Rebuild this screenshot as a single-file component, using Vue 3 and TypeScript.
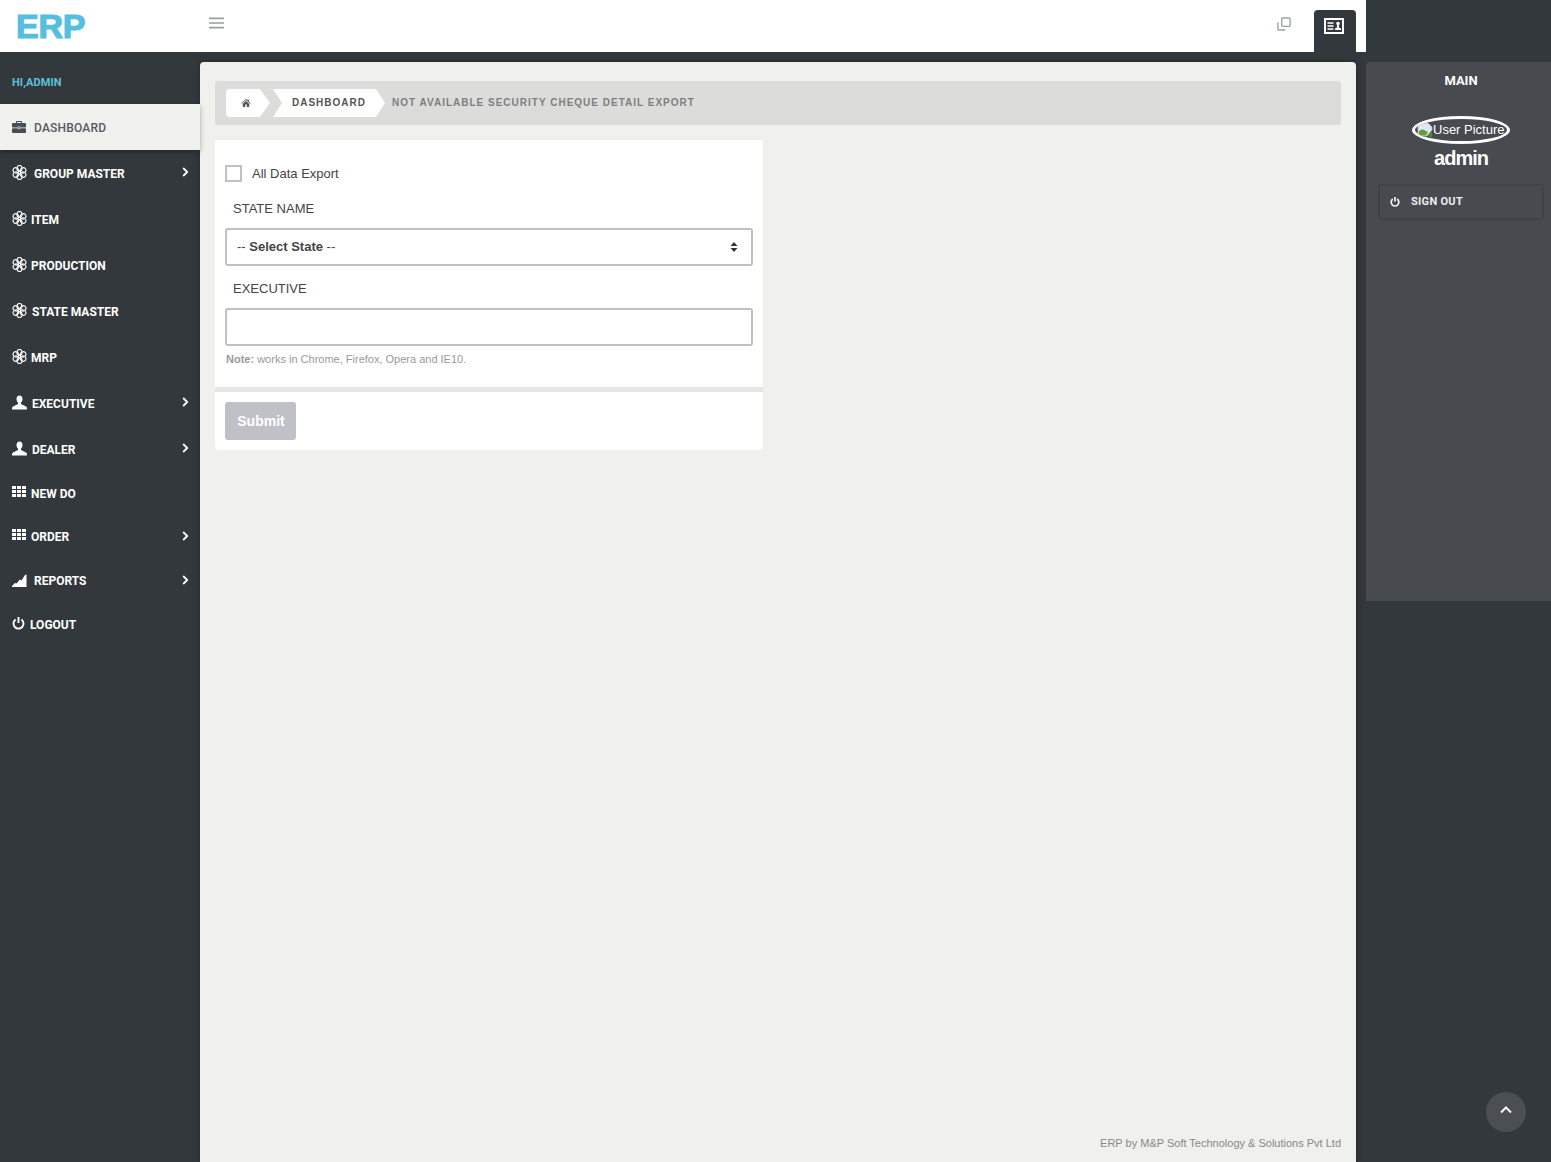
<script setup lang="ts">
type Icon = 'flower' | 'user' | 'grid' | 'chart' | 'power'
interface NavItem { label: string; icon: Icon; height: number; gap: number; arrow?: boolean; low?: boolean }
const items: NavItem[] = [
  { label: 'GROUP MASTER', icon: 'flower', height: 46, gap: 7, arrow: true },
  { label: 'ITEM', icon: 'flower', height: 46, gap: 4 },
  { label: 'PRODUCTION', icon: 'flower', height: 46, gap: 4 },
  { label: 'STATE MASTER', icon: 'flower', height: 46, gap: 5 },
  { label: 'MRP', icon: 'flower', height: 46, gap: 4 },
  { label: 'EXECUTIVE', icon: 'user', height: 46, gap: 5, arrow: true },
  { label: 'DEALER', icon: 'user', height: 46, gap: 5, arrow: true },
  { label: 'NEW DO', icon: 'grid', height: 43, gap: 5 },
  { label: 'ORDER', icon: 'grid', height: 43, gap: 5, arrow: true, low: true },
  { label: 'REPORTS', icon: 'chart', height: 45, gap: 7, arrow: true, low: true },
  { label: 'LOGOUT', icon: 'power', height: 43, gap: 5 },
]
const petals = [0, 60, 120, 180, 240, 300]
</script>

<template>
  <div class="app">
    <header class="header">
      <div class="topbar">
        <div class="logo">ERP</div>
        <svg class="burger" viewBox="0 0 16 12"><path d="M0 1h16M0 6h16M0 11h16" stroke="#9a9ea1" stroke-width="1.8" fill="none" /></svg>
        <div class="top-right">
          <svg class="restore" viewBox="0 0 15 15" fill="none" stroke="#9da3a8" stroke-width="1.5">
            <rect x="5" y="1" width="9" height="9" rx="1" />
            <path d="M1 6v7a1 1 0 0 0 1 1h7" />
          </svg>
          <div class="tab">
            <svg class="card-ico" viewBox="0 0 20 16">
              <rect x="1" y="1" width="18" height="14" fill="none" stroke="#fff" stroke-width="2" />
              <path d="M3.500 5h6M3.500 8h6M3.500 11h6" stroke="#fff" stroke-width="1.500" />
              <circle cx="14" cy="5.500" r="1.800" fill="#fff" />
              <path d="M13 7h2v2.500l2 1V12h-6v-1.500l2-1z" fill="#fff" />
            </svg>
          </div>
        </div>
      </div>
    </header>

    <div class="layout">
      <nav class="sidebar">
        <div class="hi">HI,ADMIN</div>
        <div class="dash">
          <svg class="ico-brief" viewBox="0 0 14 12">
            <path d="M5 2V1h4v1h1V.8C10 .3 9.700 0 9.200 0H4.800C4.300 0 4 .3 4 .8V2z" fill="#474c55" />
            <rect x="0" y="2" width="14" height="4.500" rx="1" fill="#474c55" />
            <rect x="0" y="7.200" width="14" height="4.800" rx="1" fill="#474c55" />
            <rect x="6" y="5.800" width="2" height="2" fill="#474c55" stroke="#f0f0ec" stroke-width=".5" />
          </svg>
          <span class="dash-label">DASHBOARD</span>
        </div>
        <div
          v-for="item in items"
          :key="item.label"
          class="nav-item"
          :style="{ height: item.height + 'px', gap: item.gap + 'px' }"
        >
          <svg v-if="item.icon === 'flower'" class="ico" viewBox="-8 -8 16 16" fill="none" stroke="#fff" stroke-width="1.200">
            <ellipse v-for="a in petals" :key="a" cx="0" cy="-4.400" rx="2.700" ry="3.100" :transform="`rotate(${a})`" />
            <circle r="1.300" />
          </svg>
          <svg v-else-if="item.icon === 'user'" class="ico" viewBox="0 0 15 14" fill="#fff">
            <path d="M7.500 0C5.700 0 4.500 1.400 4.500 3.500c0 1.500.6 2.800 1.500 3.600v1.300L1 11c-.7.400-1 1-1 3h15c0-2-.3-2.600-1-3L9 8.400V7.100c.9-.8 1.500-2.100 1.500-3.600C10.500 1.400 9.300 0 7.500 0z" />
          </svg>
          <svg v-else-if="item.icon === 'grid'" class="ico ico-grid" viewBox="0 0 14 11" fill="#fff">
            <path d="M0 0h4v3H0zM5 0h4v3H5zM10 0h4v3h-4zM0 4h4v3H0zM5 4h4v3H5zM10 4h4v3h-4zM0 8h4v3H0zM5 8h4v3H5zM10 8h4v3h-4z" />
          </svg>
          <svg v-else-if="item.icon === 'chart'" class="ico" viewBox="0 0 15 13" fill="#fff">
            <path d="M0 13V12l3-3 1.500.5L8 5.500l1.500 1L13 1l1.500-.5V13z" />
          </svg>
          <svg v-else class="ico ico-power" viewBox="0 0 13 13" fill="none" stroke="#fff" stroke-width="1.900">
            <path d="M3.600 2.600a5 5 0 1 0 5.800 0" />
            <path d="M6.500 0v6" />
          </svg>
          <span class="label">{{ item.label }}</span>
          <svg v-if="item.arrow" class="chev" :class="{ low: item.low }" viewBox="0 0 7 10"><path d="M1.200 1l4 4-4 4" fill="none" stroke="#fff" stroke-width="1.800" /></svg>
        </div>
      </nav>

      <main class="main">
        <div class="crumbs">
          <div class="crumb crumb-home">
            <svg class="home" viewBox="0 0 12 10"><path d="M6 0l2 1.700V.6h1.600v2.500L12 5.200l-.6.700L6 1.300.6 5.900 0 5.200zM2 5.800L6 2.500l4 3.300V10H7V7H5v3H2z" fill="#555" /></svg>
          </div>
          <div class="crumb crumb-dash">DASHBOARD</div>
          <div class="crumb-text">NOT AVAILABLE SECURITY CHEQUE DETAIL EXPORT</div>
        </div>

        <form class="card" @submit.prevent>
          <div class="card-body">
            <label class="check"><span class="box"></span>All Data Export</label>
            <div class="field-label first">STATE NAME</div>
            <div class="select">
              <span><i>--</i> Select State <i>--</i></span>
              <svg class="caret" viewBox="0 0 8 10"><path d="M4 0l3.500 4H.5zM4 10L.5 6h7z" fill="#333" /></svg>
            </div>
            <div class="field-label">EXECUTIVE</div>
            <input class="input" type="text" />
            <p class="note"><b>Note:</b> works in Chrome, Firefox, Opera and IE10.</p>
          </div>
          <div class="card-foot">
            <button class="submit" type="submit">Submit</button>
          </div>
        </form>

        <footer class="footer">ERP by M&amp;P Soft Technology &amp; Solutions Pvt Ltd</footer>
      </main>

      <aside class="panel">
        <div class="panel-title">MAIN</div>
        <div class="avatar">
          <svg class="broken" viewBox="0 0 16 16">
            <path d="M1 1h10l4 4v3l-5 6H1z" fill="#dfe8f2" stroke="#a8b3bf" stroke-width=".8" />
            <path d="M2 9c2-1.500 4-2 6-.5 1 .8 2 1 3 1l-2 4H2z" fill="#5da03a" />
            <path d="M11 14l4-5v6h-3z" fill="#4a8a2c" />
          </svg>
          <span>User Picture</span>
        </div>
        <div class="panel-name">admin</div>
        <div class="signout">
          <svg class="signout-ico" viewBox="0 0 13 13" fill="none" stroke="#f2f2f2" stroke-width="2.200">
            <path d="M3.600 2.600a5 5 0 1 0 5.800 0" />
            <path d="M6.500 0v6" />
          </svg>
          <span class="signout-label">SIGN OUT</span>
        </div>
      </aside>
    </div>

    <button class="to-top" type="button" aria-label="Back to top">
      <svg viewBox="0 0 12 8"><path d="M1 6.500l5-5 5 5" fill="none" stroke="#f4f4f4" stroke-width="2" /></svg>
    </button>
  </div>
</template>

<style>
html, body { margin: 0; background: #33383c; }
</style>

<style scoped>
.app {
  position: relative;
  width: 1551px;
  height: 1162px;
  overflow: hidden;
  background: #33383c;
  font-family: "Liberation Sans", Arial, sans-serif;
  display: flex;
  flex-direction: column;
}
.header { height: 52px; flex: none; }
.topbar {
  width: 1366px;
  height: 52px;
  background: #fff;
  display: flex;
  align-items: flex-start;
  box-sizing: border-box;
  padding-left: 17px;
}
.logo {
  font-size: 34px;
  font-weight: 700;
  line-height: 25px;
  margin: 14px 0 0 -1px;
  color: #56bfe0;
  -webkit-text-stroke: 1.200px #56bfe0;
  letter-spacing: -.2px;
  width: 193px;
  flex: none;
}
.burger { width: 15px; height: 12px; margin-top: 17px; }
.top-right { margin-left: auto; display: flex; align-items: flex-start; margin-right: 10px; }
.restore { width: 14px; height: 14px; margin-top: 17px; margin-right: 23px; }
.tab {
  width: 42px;
  height: 42px;
  margin-top: 10px;
  background: #33383c;
  border-radius: 4px 4px 0 0;
  display: flex;
  padding: 8px 0 0 10px;
  box-sizing: border-box;
}
.card-ico { width: 20px; height: 16px; }

.layout { flex: 1; display: flex; min-height: 0; }
.sidebar { width: 200px; flex: none; font-family: Roboto, sans-serif; }
.hi {
  height: 52px;
  line-height: 61px;
  padding-left: 12px;
  font-size: 11px;
  font-weight: 700;
  letter-spacing: .1px;
  color: #5bc0de;
}
.dash {
  height: 46px;
  background: #f0f0ec;
  display: flex;
  align-items: center;
  padding-left: 12px;
  gap: 8px;
  color: #565b66;
  font-size: 12px;
  font-weight: 500;
  letter-spacing: .2px;
  box-shadow: 0 2px 5px rgba(0, 0, 0, .3);
  position: relative;
}
.dash-label { margin-top: 1px; }
.ico-brief { width: 14px; height: 12px; margin-top: -1px; }
.nav-item {
  display: flex;
  align-items: center;
  padding: 0 11px 0 12px;
  color: #fff;
  font-size: 12px;
  font-weight: 700;
}
.ico { width: 15px; height: 15px; flex: none; margin-top: -1px; }
.ico-grid { width: 14px; height: 11px; margin-top: -4px; }
.ico-power { width: 13px; height: 13px; margin-top: -3px; }
.label { margin-top: 1px; }
.chev { width: 7px; height: 10px; margin-left: auto; margin-top: -3px; }
.chev.low { margin-top: -1px; }

.main {
  width: 1156px;
  flex: none;
  margin-top: 10px;
  background: #f0f0ec;
  border-radius: 4px 4px 0 0;
  box-shadow: 0 0 6px rgba(0, 0, 0, .3);
  box-sizing: border-box;
  padding: 19px 15px 0;
  display: flex;
  flex-direction: column;
}
.crumbs {
  height: 44px;
  background: #dcdcda;
  border-radius: 3px;
  display: flex;
  align-items: center;
  padding-left: 11px;
  flex: none;
  font-size: 10px;
  line-height: 12px;
  font-weight: 700;
  letter-spacing: 1px;
}
.crumb { height: 28px; background: #fff; display: flex; align-items: center; padding-bottom: 1px; box-sizing: border-box; }
.crumb-home {
  width: 44px;
  padding-left: 15px;
  border-radius: 4px 0 0 4px;
  clip-path: polygon(0 0, 34px 0, 44px 50%, 34px 100%, 0 100%);
}
.home { width: 10px; height: 8px; }
.crumb-dash {
  margin-left: 3px;
  width: 112px;
  padding-left: 19px;
  color: #555;
  clip-path: polygon(0 0, 103px 0, 112px 50%, 103px 100%, 0 100%, 9px 50%);
}
.crumb-text { margin-left: 7px; color: #7f7f7f; margin-top: -1px; }

.card {
  width: 548px;
  margin-top: 15px;
  background: #fff;
  border-radius: 0 0 4px 4px;
  flex: none;
}
.card-body { padding: 25px 10px 0; height: 247px; box-sizing: border-box; }
.check { display: flex; align-items: center; font-size: 13px; color: #444; height: 17px; }
.box {
  width: 17px;
  height: 17px;
  border: 2px solid #c0c0c6;
  box-sizing: border-box;
  margin-right: 10px;
  flex: none;
}
.field-label { font-size: 13px; color: #444; height: 16px; line-height: 18px; margin-left: 8px; margin-top: 14px; }
.field-label.first { margin-top: 18px; }
.select {
  width: 528px;
  height: 38px;
  margin-top: 12px;
  border: 2px solid #c0c0c6;
  border-radius: 3px;
  box-sizing: border-box;
  display: flex;
  align-items: center;
  justify-content: space-between;
  padding: 0 13px 2px 10px;
  font-size: 13px;
  line-height: 15px;
  font-weight: 700;
  color: #444;
}
.select i { font-style: normal; font-weight: 400; }
.caret { width: 8px; height: 10px; margin-top: 2px; }
.input {
  display: block;
  width: 528px;
  height: 38px;
  margin: 12px 0 0;
  border: 2px solid #c0c0c6;
  border-radius: 3px;
  box-sizing: border-box;
  outline: none;
  background: #fff;
}
.note { margin: 7px 0 0 1px; font-size: 11px; line-height: 13px; color: #999; }
.card-foot { border-top: 5px solid #e6e6e6; padding: 10px; height: 63px; box-sizing: border-box; }
.submit {
  width: 71px;
  height: 38px;
  background: #c0c1c6;
  border: none;
  border-radius: 3px;
  color: #fff;
  font-family: inherit;
  font-size: 14px;
  font-weight: 700;
  padding: 0 0 0 1px;
}
.footer {
  margin-top: auto;
  height: 25px;
  text-align: right;
  font-size: 11px;
  line-height: 13px;
  color: #888;
}

.panel {
  width: 185px;
  height: 539px;
  flex: none;
  margin: 10px 0 0 10px;
  background: #474a4f;
  box-sizing: border-box;
  padding: 10px 0 0 5px;
  display: flex;
  flex-direction: column;
  align-items: center;
  color: #fff;
  border-radius: 4px 0 0 0;
}
.panel-title { font-family: Roboto, sans-serif; font-size: 13px; font-weight: 700; line-height: 17px; }
.avatar {
  margin-top: 27px;
  width: 98px;
  height: 28px;
  border: 3px solid #fff;
  border-radius: 50%;
  box-sizing: border-box;
  overflow: hidden;
  display: flex;
  align-items: center;
  font-size: 13px;
  line-height: 15px;
  padding-bottom: 1px;
  white-space: nowrap;
  padding-left: 2px;
}
.broken { width: 16px; height: 16px; flex: none; }
.panel-name { font-size: 20px; font-weight: 700; line-height: 24px; letter-spacing: -1px; margin-top: 2px; }
.signout {
  margin-top: 14px;
  width: 166px;
  height: 36px;
  border: 2px solid #3f4247;
  border-radius: 3px;
  box-sizing: border-box;
  display: flex;
  align-items: center;
  padding-left: 10px;
  gap: 11px;
  font-family: Roboto, sans-serif;
  font-size: 11px;
  font-weight: 700;
  letter-spacing: .3px;
  color: #ededed;
}
.signout-label { margin-top: -2px; }
.signout-ico { width: 10px; height: 10px; margin-top: -1px; }

.to-top {
  position: absolute;
  left: 1486px;
  top: 1092px;
  width: 40px;
  height: 40px;
  border: none;
  border-radius: 50%;
  background: #4b4f54;
  padding: 0;
  display: flex;
  align-items: center;
  justify-content: center;
}
.to-top svg { width: 12px; height: 8px; margin-top: -4px; }
</style>
